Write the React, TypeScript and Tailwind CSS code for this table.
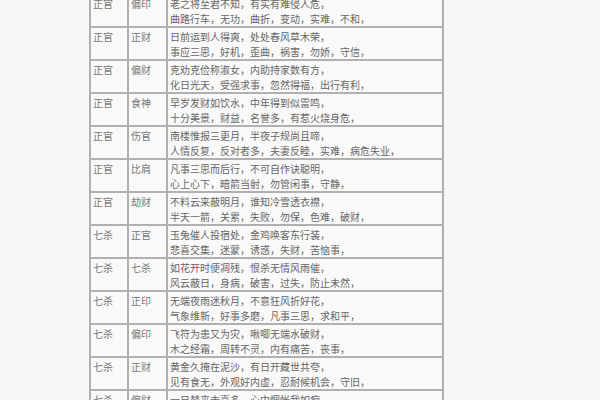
const ROWS: [string, string, string, string][] = [
  ['正官', '偏印', '老之将至君不知，有实有难侵人危，', '曲路行车，无功，曲折，变动，实难，不和，'],
  ['正官', '正财', '日前运到人得爽，处处春风草木荣，', '事应三思，好机，歪曲，祸害，勿娇，守信，'],
  ['正官', '偏财', '克劝克俭称淑女，内助持家数有方，', '化日光天，受强求事，忽然得福，出行有利，'],
  ['正官', '食神', '早岁发财如饮水，中年得到似雷鸣，', '十分美景，财益，名誉多，有惹火烧身危，'],
  ['正官', '伤官', '南楼惟报三更月，半夜子规尚且啼，', '人情反复，反对者多，夫妻反睦，实难，病危失业，'],
  ['正官', '比肩', '凡事三思而后行，不可自作诀聪明，', '心上心下，暗箭当射，勿管闲事，守静，'],
  ['正官', '劫财', '不料云来蔽明月，谁知冷雪透衣襟，', '半天一箭，关累，失败，勿保，色难，破财，'],
  ['七杀', '正官', '玉兔催人投宿处，金鸡唤客东行装，', '悲喜交集，迷蒙，诱惑，失财，苦恼事，'],
  ['七杀', '七杀', '如花开时便凋残，恨杀无情风雨催，', '风云蔽日，身病，破害，过失，防止未然，'],
  ['七杀', '正印', '无端夜雨迷秋月，不意狂风折好花，', '气象维新，好事多磨，凡事三思，求和平，'],
  ['七杀', '偏印', '飞符为患又为灾，啾唧无端水破财，', '木之经霜，周转不灵，内有痛苦，丧事，'],
  ['七杀', '正财', '黄金久掩在泥沙，有日开藏世共夸，', '见有食无，外观好内虚，忍耐候机会，守旧，'],
  ['七杀', '偏财', '一日替来去喜多，心中惆怅我如痴，', '凡事小心，谨慎行事，'],
]

export default function App() {
  return (
    <div
      className="w-[600px] h-[400px] overflow-hidden bg-[#f7f7f7] text-[#666666] text-[10px] leading-[15px]"
      style={{ fontFamily: '"Liberation Serif", "Noto Sans CJK SC", serif' }}
    >
      <div className="ml-[89px] -mt-[5px] w-[355px] border-l-2 border-r-2 border-[#b0b0b0] bg-[#f9f9f9]">
        {ROWS.map(([a, b, l1, l2], i) => (
          <div
            key={i}
            className="grid grid-cols-[38px_39px_1fr] h-[33px] border-b-2 border-[#b0b0b0]"
          >
            <div className="border-r-2 border-[#b0b0b0] pl-[2px] pt-[2px] text-[#777777]">{a}</div>
            <div className="border-r-2 border-[#b0b0b0] pl-[2px] pt-[2px] text-[#777777]">{b}</div>
            <div className="pl-[2px] pt-[2px] whitespace-nowrap overflow-hidden">
              <div>{l1}</div>
              <div>{l2}</div>
            </div>
          </div>
        ))}
      </div>
    </div>
  )
}
